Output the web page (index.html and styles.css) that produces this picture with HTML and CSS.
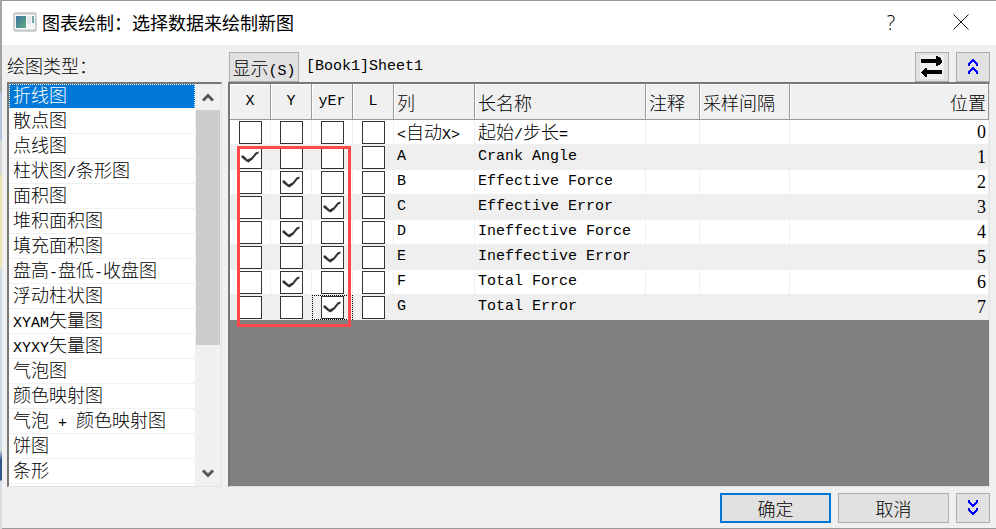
FILE: index.html
```html
<!DOCTYPE html>
<html lang="zh-CN">
<head>
<meta charset="utf-8">
<title>图表绘制：选择数据来绘制新图</title>
<link rel="stylesheet" href="styles.css">
</head>
<body>
<main class="dialog">
  <header class="titlebar">
    <svg class="app-icon" width="24" height="20" viewBox="0 0 24 20" aria-hidden="true">
      <defs><linearGradient id="pane" x1="0" y1="0" x2="1" y2="1"><stop offset="0" stop-color="#3d6fa8"/><stop offset="1" stop-color="#62b07c"/></linearGradient></defs>
      <rect x="1" y="1" width="22" height="18" rx="1" fill="#dfe2e4" stroke="#a5abaf"/>
      <rect x="2" y="3" width="20" height="14" fill="#f4f6f7"/>
      <rect x="3" y="4" width="10" height="12" fill="url(#pane)"/>
      <rect x="14" y="4" width="4" height="8" fill="#e0eaec"/>
      <rect x="19" y="4" width="2" height="7" fill="#73a9a5"/>
    </svg>
    <h1 class="title">图表绘制：选择数据来绘制新图</h1>
    <button class="caption-button" type="button" aria-label="帮助">?</button>
    <button class="caption-button" type="button" aria-label="关闭">
      <svg width="16" height="16" viewBox="0 0 16 16"><path d="M.5.5l15 15M15.5.5l-15 15" stroke="#111" fill="none"/></svg>
    </button>
  </header>

  <div class="content">
    <section class="types">
      <h2 class="label" id="types-label">绘图类型：</h2>
      <div class="list-frame">
        <ul class="list" role="listbox" aria-labelledby="types-label">
          <li class="item selected" role="option" aria-selected="true">折线图</li>
          <li class="item" role="option">散点图</li>
          <li class="item" role="option">点线图</li>
          <li class="item" role="option">柱状图<span class="mono">/</span>条形图</li>
          <li class="item" role="option">面积图</li>
          <li class="item" role="option">堆积面积图</li>
          <li class="item" role="option">填充面积图</li>
          <li class="item" role="option">盘高<span class="mono">-</span>盘低<span class="mono">-</span>收盘图</li>
          <li class="item" role="option">浮动柱状图</li>
          <li class="item" role="option"><span class="mono">XYAM</span>矢量图</li>
          <li class="item" role="option"><span class="mono">XYXY</span>矢量图</li>
          <li class="item" role="option">气泡图</li>
          <li class="item" role="option">颜色映射图</li>
          <li class="item" role="option">气泡<span class="mono"> + </span>颜色映射图</li>
          <li class="item" role="option">饼图</li>
          <li class="item" role="option">条形</li>
        </ul>
        <div class="scrollbar">
          <button class="scroll-button" type="button" aria-label="向上滚动"><svg width="12" height="9" viewBox="0 0 12 9"><path d="M1 7.5l5-5 5 5" stroke="#555" stroke-width="3" fill="none"/></svg></button>
          <div class="track"><div class="thumb"></div></div>
          <button class="scroll-button" type="button" aria-label="向下滚动"><svg width="12" height="9" viewBox="0 0 12 9"><path d="M1 1.5l5 5 5-5" stroke="#555" stroke-width="3" fill="none"/></svg></button>
        </div>
      </div>
    </section>

    <section class="data">
      <div class="toolbar">
        <button class="button show" type="button">显示<span class="mono">(S)</span></button>
        <span class="sheet mono">[Book1]Sheet1</span>
        <button class="button square" type="button" aria-label="交换">
          <svg width="24" height="24" viewBox="0 0 24 24" shape-rendering="crispEdges"><rect width="24" height="24" fill="#f0f0f0"/><path d="M1 4h15V1h2v1h2v1h1v2h1v3h-1v1h-1v1h-2v1h-2V8H1zM22 15H7v-2H5v1H4v1H3v1H2v1H1v1h1v1h1v1h1v1h1v1h2v-3h15z"/></svg>
        </button>
        <button class="button square" type="button" aria-label="收起上方">
          <svg width="12" height="16" viewBox="0 0 12 16" shape-rendering="crispEdges"><path d="M5 0h2v1h1v1h1v1h1v1h1v3H9V5H8V4H7V3H5v1H4v1H3v2H1V4h1V3h1V2h1V1h1zM5 8h2v1h1v1h1v1h1v1h1v3H9v-2H8v-1H7v-1H5v1H4v1H3v2H1v-3h1v-1h1v-1h1V9h1z" fill="#00f"/></svg>
        </button>
      </div>
      <div class="grid-frame">
        <table class="grid">
          <colgroup><col class="c-check"><col class="c-check"><col class="c-check"><col class="c-check"><col class="c-col"><col class="c-name"><col class="c-note"><col class="c-rate"><col></colgroup>
          <thead><tr><th class="mono mid">X</th><th class="mono mid">Y</th><th class="mono mid">yEr</th><th class="mono mid">L</th><th>列</th><th>长名称</th><th>注释</th><th>采样间隔</th><th class="end">位置</th></tr></thead>
          <tbody>
            <tr><td class="mid"><input type="checkbox" aria-label="自动X X"></td><td class="mid"><input type="checkbox" aria-label="自动X Y"></td><td class="mid"><input type="checkbox" aria-label="自动X yEr"></td><td class="mid"><input type="checkbox" aria-label="自动X L"></td><td><span class="mono">&lt;</span>自动<span class="mono">X&gt;</span></td><td>起始<span class="mono">/</span>步长<span class="mono">=</span></td><td></td><td></td><td class="num end">0</td></tr>
            <tr><td class="mid"><input type="checkbox" aria-label="A X" checked></td><td class="mid"><input type="checkbox" aria-label="A Y"></td><td class="mid"><input type="checkbox" aria-label="A yEr"></td><td class="mid"><input type="checkbox" aria-label="A L"></td><td class="mono">A</td><td class="mono">Crank Angle</td><td></td><td></td><td class="num end">1</td></tr>
            <tr><td class="mid"><input type="checkbox" aria-label="B X"></td><td class="mid"><input type="checkbox" aria-label="B Y" checked></td><td class="mid"><input type="checkbox" aria-label="B yEr"></td><td class="mid"><input type="checkbox" aria-label="B L"></td><td class="mono">B</td><td class="mono">Effective Force</td><td></td><td></td><td class="num end">2</td></tr>
            <tr><td class="mid"><input type="checkbox" aria-label="C X"></td><td class="mid"><input type="checkbox" aria-label="C Y"></td><td class="mid"><input type="checkbox" aria-label="C yEr" checked></td><td class="mid"><input type="checkbox" aria-label="C L"></td><td class="mono">C</td><td class="mono">Effective Error</td><td></td><td></td><td class="num end">3</td></tr>
            <tr><td class="mid"><input type="checkbox" aria-label="D X"></td><td class="mid"><input type="checkbox" aria-label="D Y" checked></td><td class="mid"><input type="checkbox" aria-label="D yEr"></td><td class="mid"><input type="checkbox" aria-label="D L"></td><td class="mono">D</td><td class="mono">Ineffective Force</td><td></td><td></td><td class="num end">4</td></tr>
            <tr><td class="mid"><input type="checkbox" aria-label="E X"></td><td class="mid"><input type="checkbox" aria-label="E Y"></td><td class="mid"><input type="checkbox" aria-label="E yEr" checked></td><td class="mid"><input type="checkbox" aria-label="E L"></td><td class="mono">E</td><td class="mono">Ineffective Error</td><td></td><td></td><td class="num end">5</td></tr>
            <tr><td class="mid"><input type="checkbox" aria-label="F X"></td><td class="mid"><input type="checkbox" aria-label="F Y" checked></td><td class="mid"><input type="checkbox" aria-label="F yEr"></td><td class="mid"><input type="checkbox" aria-label="F L"></td><td class="mono">F</td><td class="mono">Total Force</td><td></td><td></td><td class="num end">6</td></tr>
            <tr><td class="mid"><input type="checkbox" aria-label="G X"></td><td class="mid"><input type="checkbox" aria-label="G Y"></td><td class="mid current"><input type="checkbox" aria-label="G yEr" checked></td><td class="mid"><input type="checkbox" aria-label="G L"></td><td class="mono">G</td><td class="mono">Total Error</td><td></td><td></td><td class="num end">7</td></tr>
          </tbody>
        </table>
        <div class="highlight"></div>
      </div>
    </section>
  </div>

  <footer class="actions">
    <button class="button wide primary" type="button">确定</button>
    <button class="button wide" type="button">取消</button>
    <button class="button square" type="button" aria-label="展开下方">
      <svg width="12" height="16" viewBox="0 0 12 16" shape-rendering="crispEdges"><path transform="matrix(1 0 0 -1 0 15)" d="M5 0h2v1h1v1h1v1h1v1h1v3H9V5H8V4H7V3H5v1H4v1H3v2H1V4h1V3h1V2h1V1h1zM5 8h2v1h1v1h1v1h1v1h1v3H9v-2H8v-1H7v-1H5v1H4v1H3v2H1v-3h1v-1h1v-1h1V9h1z" fill="#00f"/></svg>
    </button>
  </footer>
</main>
</body>
</html>
```
FILE: styles.css
```css
* { box-sizing: border-box; }

body {
  margin: 0;
  min-height: 100vh;
  display: flex;
  padding-left: 2px;
  background: linear-gradient(#a5a5a5 92px, #b4c4d8 93px 140px, #d8d8d8 141px 174px, #e8e4b4 175px 268px, #d0d8e0 269px 450px, #31568c 460px 480px, #d8dde4 481px);
  font-family: "Noto Sans CJK SC", sans-serif;
  font-size: 18px;
  font-weight: 300;
  color: #000;
}

button { font: inherit; color: inherit; padding: 0; }
svg { display: block; }

.mono {
  font-family: "Liberation Mono", monospace;
  font-size: 15px;
  font-weight: 400;
  white-space: pre;
}

span.mono { line-height: 1; }

.num { font-family: "Liberation Serif", serif; }

.dialog {
  flex: 1;
  min-width: 0;
  display: flex;
  flex-direction: column;
  background: #f0f0f0;
  border-top: 1px solid #999;
  border-bottom: 1px solid #999;
}

.titlebar {
  display: flex;
  align-items: center;
  height: 44px;
  padding: 0 0 2px 11px;
  background: #fff;
}

.title {
  flex: 1;
  margin: 0 0 0 5px;
  font-size: 18px;
  font-weight: 400;
}

.caption-button {
  display: flex;
  align-items: center;
  justify-content: center;
  width: 70px;
  height: 42px;
  border: 0;
  background: none;
  font-family: "Open Sans", sans-serif;
  font-size: 20px;
}

.content {
  flex: 1;
  display: flex;
  gap: 6px;
  padding: 6px 6px 0 5px;
}

.types {
  flex: none;
  width: 215px;
  display: flex;
  flex-direction: column;
}

.label {
  height: 31px;
  margin: 0;
  font-size: 18px;
  font-weight: 300;
  line-height: 28px;
}

.list-frame {
  flex: 1;
  display: flex;
  border: 1px solid #e3e3e3;
  border-top: 2px solid #777;
  border-left: 2px solid #777;
}

.list {
  flex: 1;
  margin: 0;
  padding: 0;
  list-style: none;
  background: #fff;
}

.item {
  height: 25px;
  padding-left: 4px;
  border-bottom: 1px solid #f0f0f0;
  line-height: 20px;
  white-space: nowrap;
}

.selected {
  background: #0078d7;
  color: #fff;
  outline: 1px dotted #fff;
  outline-offset: -1px;
}

.scrollbar {
  width: 26px;
  display: flex;
  flex-direction: column;
}

.scroll-button {
  height: 26px;
  display: flex;
  align-items: center;
  justify-content: center;
  border: 0;
  background: none;
}

.track { flex: 1; }
.thumb { height: 67%; margin: 0 1px; background: #cdcdcd; }

.data {
  flex: 1;
  min-width: 0;
  display: flex;
  flex-direction: column;
}

.toolbar {
  display: flex;
  align-items: center;
  gap: 7px;
  height: 31px;
  padding-left: 1px;
}

.button {
  height: 30px;
  border: 1px solid #adadad;
  background: #e1e1e1;
  line-height: 24px;
  text-align: center;
}

.square {
  display: flex;
  align-items: center;
  justify-content: center;
  width: 34px;
}

.show { width: 70px; }
.wide { width: 111px; }
.primary { border: 2px solid #0078d7; }
.sheet { flex: 1; }

.grid-frame {
  position: relative;
  flex: 1;
  border: 1px solid #e3e3e3;
  border-top: 2px solid #777;
  border-left: 2px solid #777;
  background: #808080;
}

.grid {
  width: 100%;
  table-layout: fixed;
  border-collapse: separate;
  border-spacing: 0;
  background: #fff;
}

.c-check { width: 41px; }
.c-col { width: 81px; }
.c-name { width: 171px; }
.c-note { width: 54px; }
.c-rate { width: 90px; }

th, td {
  padding: 0 0 0 3px;
  text-align: left;
  white-space: nowrap;
}

th {
  height: 36px;
  background: #f0f0f0;
  border-right: 1px solid #999;
  border-bottom: 1px solid #999;
  box-shadow: inset 1px 1px #fff;
  font-weight: 300;
  line-height: 24px;
}

td {
  height: 25px;
  line-height: 20px;
  border-right: 1px solid #efefef;
  border-bottom: 1px solid #efefef;
}

tbody tr:nth-child(even) { background: #efefef; }

.mid { padding: 0; text-align: center; }
.end { padding-right: 2px; text-align: right; }

input {
  appearance: none;
  display: block;
  width: 23px;
  height: 23px;
  margin: 0 auto;
  border: 1px solid #333;
  background: #fff;
}

input:checked::before {
  content: "";
  display: block;
  width: 21px;
  height: 21px;
  background: #333;
  clip-path: polygon(2px 9px, 4px 9px, 8px 13px, 12px 11px, 16px 6px, 19px 5px, 19px 7px, 17px 8px, 13px 13px, 9px 16px, 7px 15px, 2px 11px);
}

.current {
  outline: 1px dotted #000;
  outline-offset: -1px;
}

.highlight {
  position: absolute;
  left: 7px;
  top: 62px;
  width: 114px;
  height: 181px;
  border: 3px solid #ff4848;
  pointer-events: none;
}

.actions {
  display: flex;
  justify-content: flex-end;
  gap: 7px;
  padding: 6px 6px 5px;
}
```
